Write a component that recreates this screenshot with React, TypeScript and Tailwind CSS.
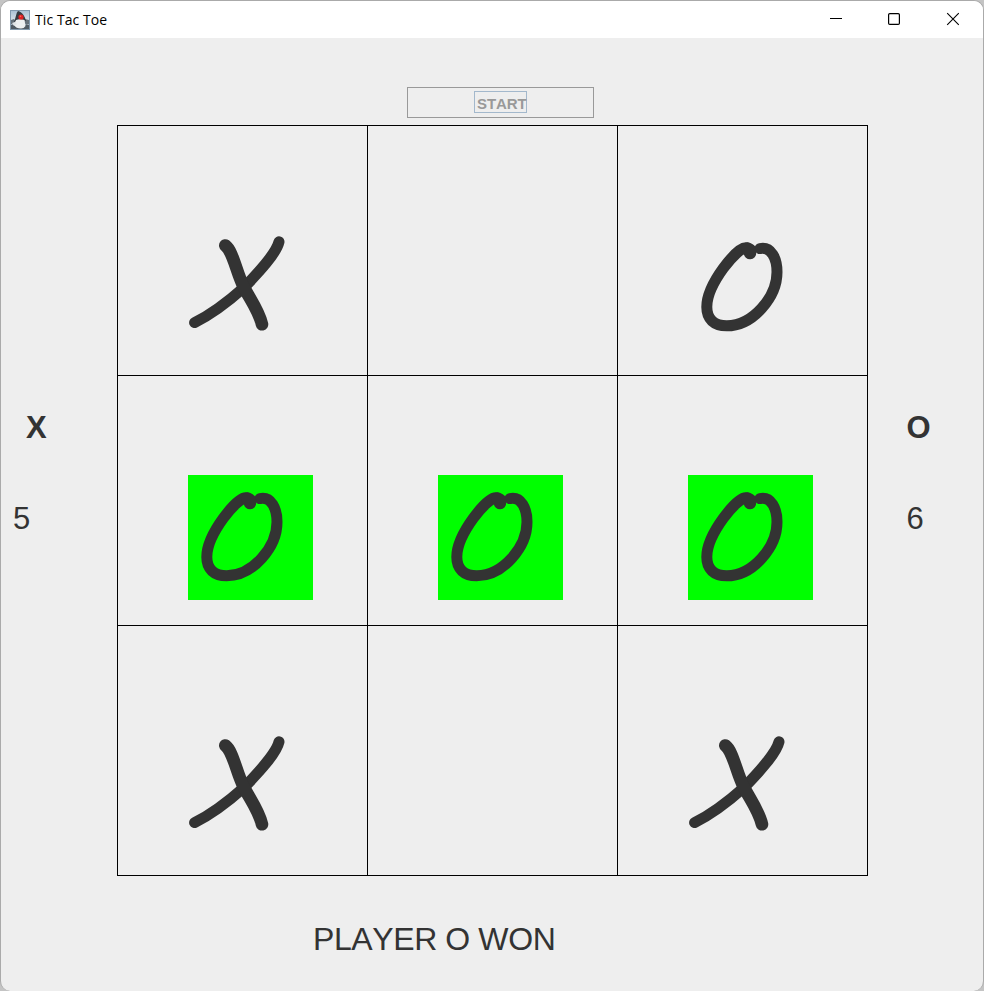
type Mark = 'X' | 'O' | '';

const board: { mark: Mark; win?: boolean }[] = [
  { mark: 'X' }, { mark: '' }, { mark: 'O' },
  { mark: 'O', win: true }, { mark: 'O', win: true }, { mark: 'O', win: true },
  { mark: 'X' }, { mark: '' }, { mark: 'X' },
];

function Cross() {
  return (
    <svg viewBox="0 0 125 125" className="block size-[125px]" fill="none" stroke="#333333" strokeLinecap="round" strokeLinejoin="round">
      <path d="M91 16.800C88.500 28 72 46 56 62.500C42 75 22 90 6.600 97.600" strokeWidth="11" />
      <path d="M37.300 20.500C45 26 48.500 48 56 62.500C62 74 71 86 74 99.300" strokeWidth="12.600" />
    </svg>
  );
}

function Nought() {
  return (
    <svg viewBox="0 0 125 125" className="block size-[125px]" fill="none" stroke="#333333" strokeLinecap="round" strokeLinejoin="round">
      <path d="M58.500 22.900C50 21 18.800 59 18.800 82C18.800 94 26 100.800 38.700 100.800C65 100.800 89 72 89 47C89 33 83 21.500 72 23.600" strokeWidth="11" />
      <path d="M59.500 23.600L61.800 24.800L62 28" strokeWidth="12.500" />
    </svg>
  );
}

function JavaIcon() {
  return (
    <svg viewBox="0 0 20 20" className="size-5 shrink-0">
      <defs>
        <linearGradient id="tile" x1="0" y1="0" x2="0" y2="1">
          <stop offset="0" stopColor="#a9c0d3" />
          <stop offset=".5" stopColor="#d5dfe6" />
          <stop offset="1" stopColor="#8599aa" />
        </linearGradient>
      </defs>
      <rect x=".5" y=".5" width="19" height="19" fill="url(#tile)" stroke="#8299ad" />
      <path d="M1 10L4 9L6 12L4 15L1 14ZM15 9L19 10V14L16 15L14 12Z" fill="#66717a" />
      <path d="M1 15H19V19H1Z" fill="#515b64" />
      <path d="M8 1C6 3 6 7 4 12L9 10L16 11C15 6 12 2 8 1Z" fill="#353a40" />
      <path d="M6 10Q10 8.500 14.500 10L15.500 16Q14 18.500 11 18.500Q6 18.500 4 15Z" fill="#eef0f1" />
      <path d="M2 13L5 12L7 14L4 16Z" fill="#e1e5e8" />
      <circle cx="11" cy="7" r="2.600" fill="#df2022" />
      <circle cx="10.500" cy="6.300" r=".8" fill="#ff6a60" />
    </svg>
  );
}

function Score({ name, value, className }: { name: string; value: number; className: string }) {
  return (
    <div className={className}>
      <div className="text-[31px] leading-[36px] font-bold">{name}</div>
      <div className="mt-[55px] -ml-[var(--shift)] text-[31px] leading-[36px]">{value}</div>
    </div>
  );
}

export default function App() {
  return (
    <div className="h-[991px] w-[984px] overflow-hidden bg-[#c4c4c4]">
      <div className="flex h-full w-full flex-col overflow-hidden rounded-[10px] border border-b-0 border-[#aaaaaa] bg-[#eeeeee] font-['Liberation_Sans',Arial,sans-serif] text-[#333333]">
        <header className="flex h-[37px] shrink-0 items-center bg-white pl-[9px] text-black">
          <JavaIcon />
          <h1 className="ml-[5px] font-['Open_Sans','Noto_Sans',sans-serif] text-[14px] leading-5 tracking-[0.08px]">Tic Tac Toe</h1>
          <div className="ml-auto flex self-start">
            <button className="flex h-[35px] w-[58px] items-center justify-center" aria-label="Minimize">
              <svg className="size-3.5" viewBox="0 0 14 14"><path d="M1 6.500H13" stroke="#000" /></svg>
            </button>
            <button className="flex h-[35px] w-[58px] items-center justify-center" aria-label="Maximize">
              <svg className="size-3.5" viewBox="0 0 14 14" fill="none"><rect x="1.600" y="1.600" width="10.800" height="10.800" rx="1.200" stroke="#000" strokeWidth="1.200" /></svg>
            </button>
            <button className="flex h-[35px] w-[60px] items-center justify-center" aria-label="Close">
              <svg className="size-3.5" viewBox="0 0 14 14"><path d="M1.200 1.200L12.800 12.800M12.800 1.200L1.200 12.800" stroke="#000" strokeWidth="1.100" /></svg>
            </button>
          </div>
        </header>
        <button className="mt-[49px] ml-[406px] flex h-[31px] w-[187px] shrink-0 justify-center border border-[#999999] pt-[3px]">
          <span className="h-[22px] w-[53px] border border-[#a3b8cc] pl-0.5 text-left text-[15px] leading-[23px] font-bold tracking-[-0.1px] text-[#999999] [font-kerning:none]">START</span>
        </button>
        <main className="mt-[7px] flex shrink-0">
          <Score name="X" value={5} className="w-[116px] pt-[285px] pl-[25px] [--shift:13px]" />
          <section className="grid size-[751px] shrink-0 grid-cols-[repeat(3,250px)] grid-rows-[repeat(3,250px)] border-t border-l border-black">
            {board.map((cell, i) => (
              <div key={i} className="border-r border-b border-black pt-[99px] pl-[70px]">
                {cell.mark && (
                  <div className={cell.win ? 'size-[125px] bg-[#00ff00]' : 'size-[125px]'}>
                    {cell.mark === 'X' ? <Cross /> : <Nought />}
                  </div>
                )}
              </div>
            ))}
          </section>
          <Score name="O" value={6} className="pt-[285px] pl-[38.500px] [--shift:0px]" />
        </main>
        <p className="mt-[45px] ml-[312px] text-[32px] leading-[37px] tracking-[-0.4px] whitespace-nowrap [font-kerning:none]">PLAYER O WON</p>
      </div>
    </div>
  );
}
